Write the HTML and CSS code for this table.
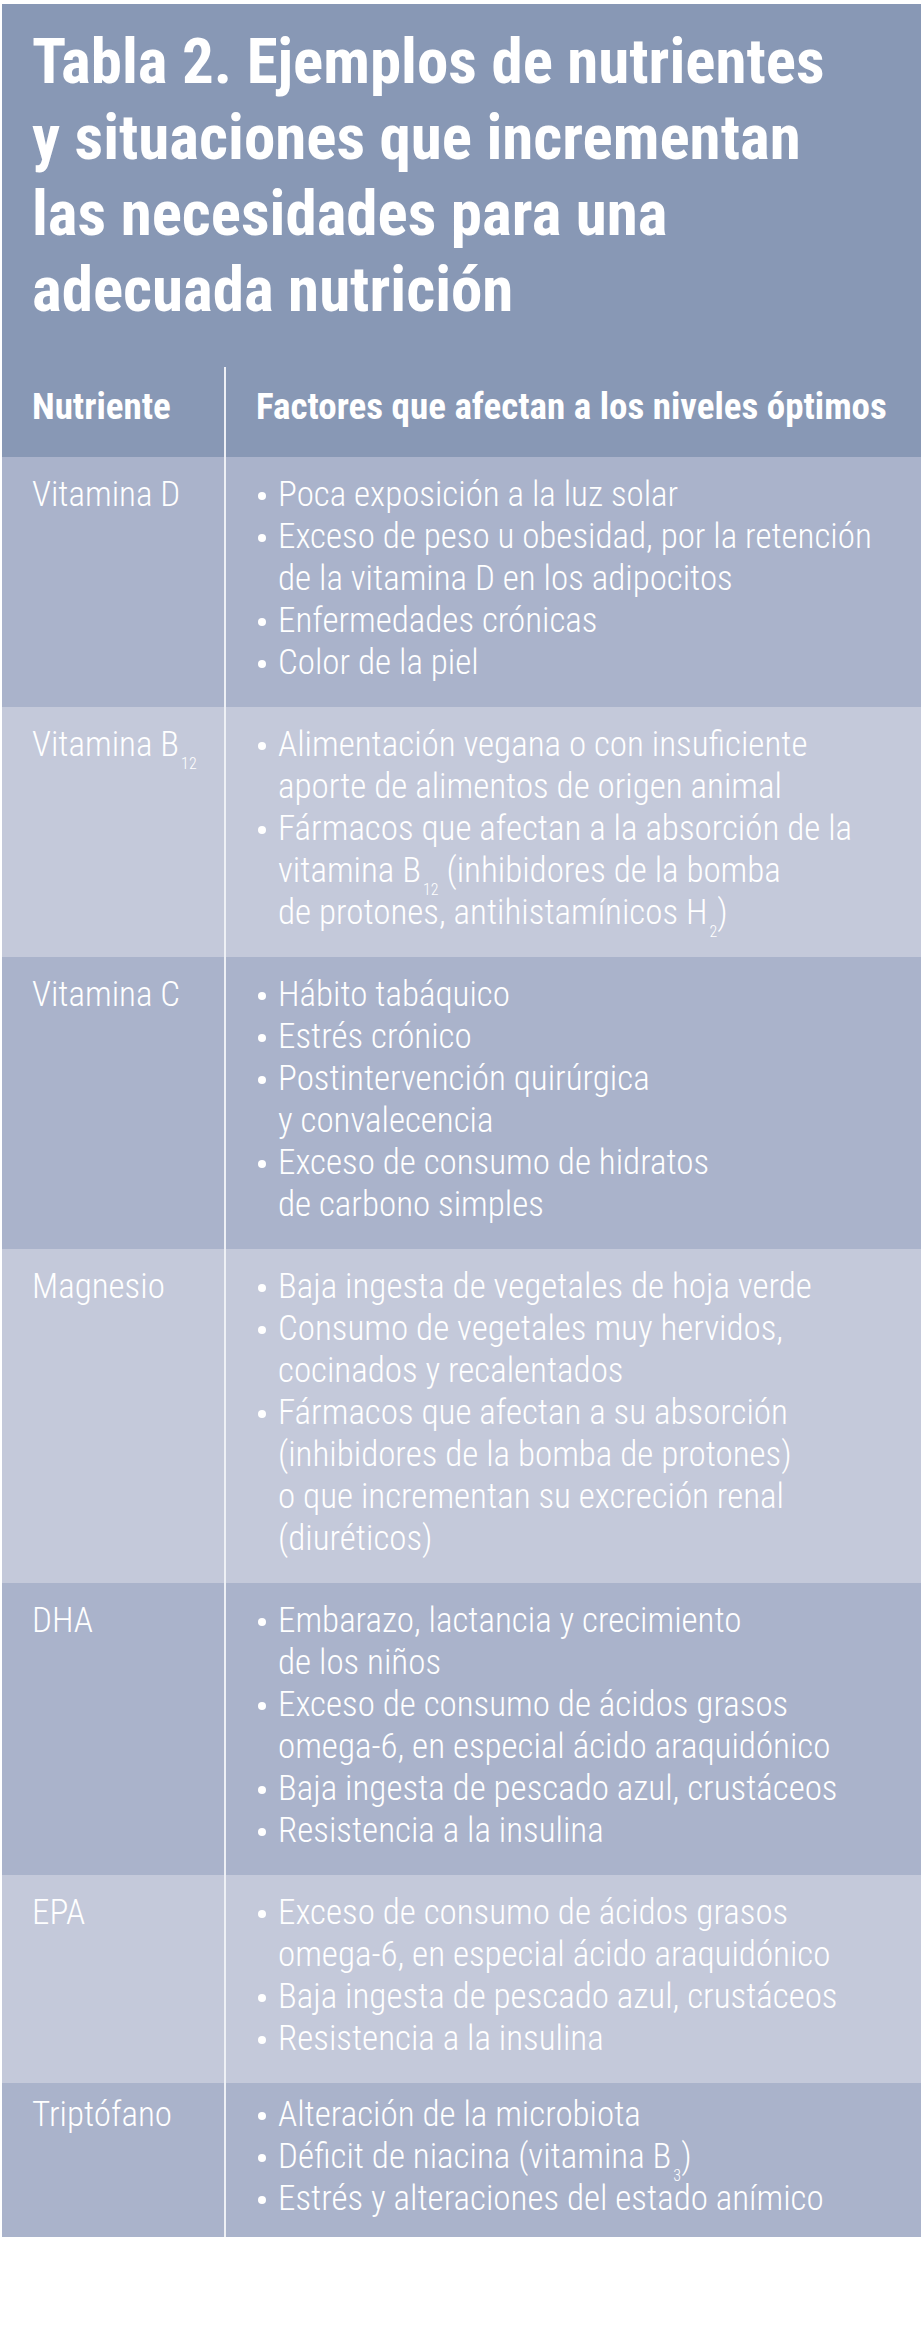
FILE: index.html
```html
<!DOCTYPE html>
<html lang="es">
<head>
<meta charset="utf-8">
<title>Tabla 2. Ejemplos de nutrientes</title>
<link rel="stylesheet" href="styles.css">
</head>
<body>
<div class="table">
  <div class="title-block">
    <h1 class="title">Tabla 2. Ejemplos de nutrientes<br>y situaciones que incrementan<br>las necesidades para una<br>adecuada nutrición</h1>
  </div>
  <div class="row row-head">
    <div class="name">Nutriente</div>
    <div class="factors">Factores que afectan a los niveles óptimos</div>
  </div>
  <div class="row row-dark">
    <div class="name">Vitamina D</div>
    <div class="factors">
      <ul class="list">
        <li>Poca exposición a la luz solar</li>
        <li>Exceso de peso u obesidad, por la retención<br>de la vitamina D en los adipocitos</li>
        <li>Enfermedades crónicas</li>
        <li>Color de la piel</li>
      </ul>
    </div>
  </div>
  <div class="row row-light">
    <div class="name">Vitamina B<sub>12</sub></div>
    <div class="factors">
      <ul class="list">
        <li>Alimentación vegana o con insuficiente<br>aporte de alimentos de origen animal</li>
        <li>Fármacos que afectan a la absorción de la<br>vitamina B<sub>12</sub> (inhibidores de la bomba<br>de protones, antihistamínicos H<sub>2</sub>)</li>
      </ul>
    </div>
  </div>
  <div class="row row-dark">
    <div class="name">Vitamina C</div>
    <div class="factors">
      <ul class="list">
        <li>Hábito tabáquico</li>
        <li>Estrés crónico</li>
        <li>Postintervención quirúrgica<br>y convalecencia</li>
        <li>Exceso de consumo de hidratos<br>de carbono simples</li>
      </ul>
    </div>
  </div>
  <div class="row row-light">
    <div class="name">Magnesio</div>
    <div class="factors">
      <ul class="list">
        <li>Baja ingesta de vegetales de hoja verde</li>
        <li>Consumo de vegetales muy hervidos,<br>cocinados y recalentados</li>
        <li>Fármacos que afectan a su absorción<br>(inhibidores de la bomba de protones)<br>o que incrementan su excreción renal<br>(diuréticos)</li>
      </ul>
    </div>
  </div>
  <div class="row row-dark">
    <div class="name">DHA</div>
    <div class="factors">
      <ul class="list">
        <li>Embarazo, lactancia y crecimiento<br>de los niños</li>
        <li>Exceso de consumo de ácidos grasos<br>omega-6, en especial ácido araquidónico</li>
        <li>Baja ingesta de pescado azul, crustáceos</li>
        <li>Resistencia a la insulina</li>
      </ul>
    </div>
  </div>
  <div class="row row-light">
    <div class="name">EPA</div>
    <div class="factors">
      <ul class="list">
        <li>Exceso de consumo de ácidos grasos<br>omega-6, en especial ácido araquidónico</li>
        <li>Baja ingesta de pescado azul, crustáceos</li>
        <li>Resistencia a la insulina</li>
      </ul>
    </div>
  </div>
  <div class="row row-dark row-last">
    <div class="name">Triptófano</div>
    <div class="factors">
      <ul class="list">
        <li>Alteración de la microbiota</li>
        <li>Déficit de niacina (vitamina B<sub>3</sub>)</li>
        <li>Estrés y alteraciones del estado anímico</li>
      </ul>
    </div>
  </div>
</div>
</body>
</html>
```

FILE: styles.css
```css
html, body {
  margin: 0;
  padding: 0;
  background: #ffffff;
}

body {
  font-family: "Roboto Condensed", "Open Sans", sans-serif;
  color: #ffffff;
}

.table {
  width: 919px;
  margin: 4px 2px 0 2px;
}

.title-block {
  background: #8898b5;
  padding: 20px 32px 39px 30px;
}

.title {
  margin: 0;
  font-size: 63px;
  line-height: 76px;
  font-weight: 700;
  white-space: nowrap;
}

.row {
  display: grid;
  grid-template-columns: 224px 1fr;
}

.row-head {
  background: #8898b5;
  font-weight: 700;
  font-size: 37px;
  line-height: 42px;
}

.row-head .name,
.row-head .factors {
  padding-top: 19px;
  padding-bottom: 29px;
}

.row-dark {
  background: #aab3cb;
}

.row-light {
  background: #c4c9da;
}

.name {
  box-sizing: border-box;
  border-right: 2px solid #eef0f5;
  padding: 17px 0 23px 30px;
  white-space: nowrap;
}

.factors {
  padding: 17px 0 23px 30px;
  white-space: nowrap;
}

.row-dark .name,
.row-dark .factors,
.row-light .name,
.row-light .factors {
  font-size: 35px;
  line-height: 42px;
  font-weight: 300;
}

.row-last .name,
.row-last .factors {
  padding-top: 11px;
  padding-bottom: 17px;
}

.list {
  list-style: none;
  margin: 0;
  padding: 0;
}

.list li {
  position: relative;
  padding-left: 22px;
}

.list li::before {
  content: "";
  position: absolute;
  left: 2px;
  top: 18px;
  width: 8px;
  height: 8px;
  border-radius: 50%;
  background: #ffffff;
}

sub {
  font-size: 16px;
  line-height: 0;
  vertical-align: -13px;
  margin-left: 2px;
}
```
